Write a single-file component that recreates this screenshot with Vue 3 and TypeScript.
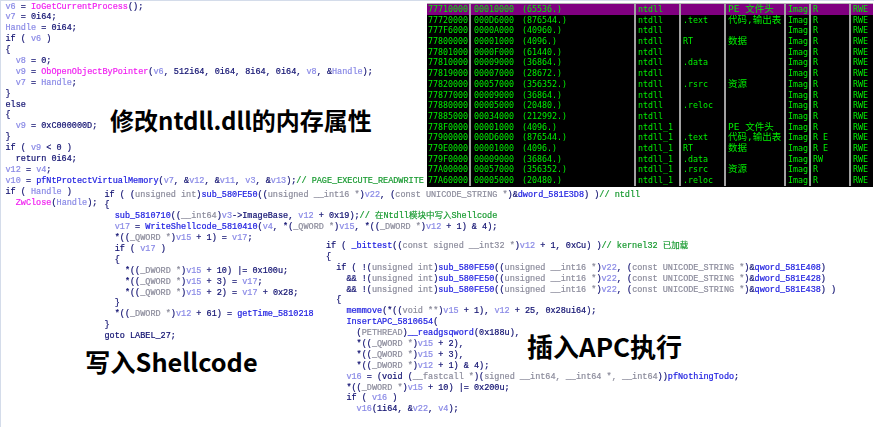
<script setup lang="ts">
type Tok = { c: string; t: string }
function parse(line: string): Tok[] {
  const out: Tok[] = []
  const re = /\[(\w)\|([^\]]*)\]/g
  let last = 0
  let m: RegExpExecArray | null
  while ((m = re.exec(line))) {
    if (m.index > last) out.push({ c: 'd', t: line.slice(last, m.index) })
    out.push({ c: m[1], t: m[2] })
    last = m.index + m[0].length
  }
  if (last < line.length) out.push({ c: 'd', t: line.slice(last) })
  if (!out.length) out.push({ c: 'd', t: ' ' })
  return out
}
const blockA = [
  '[v|v6] = [p|IoGetCurrentProcess]();',
  '[v|v7] = 0i64;',
  '[v|Handle] = 0i64;',
  'if ( [v|v6] )',
  '{',
  '  [v|v8] = 0;',
  '  [v|v9] = [p|ObOpenObjectByPointer]([v|v6], 512i64, 0i64, 8i64, 0i64, [v|v8], &[v|Handle]);',
  '  [v|v7] = [v|Handle];',
  '}',
  'else',
  '{',
  '  [v|v9] = 0xC000000D;',
  '}',
  'if ( [v|v9] < 0 )',
  '  return 0i64;',
  '[v|v12] = [v|v4];',
  '[v|v10] = [n|pfNtProtectVirtualMemory]([v|v7], &[v|v12], &[v|v11], [v|v3], &[v|v13]);[g|// PAGE_EXECUTE_READWRITE]',
  'if ( [v|Handle] )',
  '  [p|ZwClose]([v|Handle]);'
].map(parse)
const blockB = [
  'if ( ([t|unsigned int])[n|sub_580FE50](([t|unsigned __int16 *])[v|v22], ([t|const UNICODE_STRING *])&[n|dword_581E3D8]) )[g|// ntdll]',
  '{',
  '  [n|sub_5810710](([t|__int64])[v|v3]->ImageBase, [v|v12] + 0x19);[g|// 在Ntdll模块中写入Shellcode]',
  '  [v|v17] = [n|WriteShellcode_5810410]([v|v4], *([t|_QWORD *])[v|v15], *(([t|_DWORD *])[v|v12] + 1) & 4);',
  '  *(([t|_QWORD *])[v|v15] + 1) = [v|v17];',
  '  if ( [v|v17] )',
  '  {',
  '    *(([t|_DWORD *])[v|v15] + 10) |= 0x100u;',
  '    *(([t|_QWORD *])[v|v15] + 3) = [v|v17];',
  '    *(([t|_QWORD *])[v|v15] + 2) = [v|v17] + 0x28;',
  '  }',
  '  *(([t|_DWORD *])[v|v12] + 61) = [n|getTime_5810218]',
  '}',
  'goto LABEL_27;'
].map(parse)
const blockC = [
  'if ( [n|_bittest](([t|const signed __int32 *])[v|v12] + 1, 0xCu) )[g|// kernel32 已加载]',
  '{',
  '  if ( !([t|unsigned int])[n|sub_580FE50](([t|unsigned __int16 *])[v|v22], ([t|const UNICODE_STRING *])&[n|qword_581E408])',
  '    && !([t|unsigned int])[n|sub_580FE50](([t|unsigned __int16 *])[v|v22], ([t|const UNICODE_STRING *])&[n|dword_581E428])',
  '    && !([t|unsigned int])[n|sub_580FE50](([t|unsigned __int16 *])[v|v22], ([t|const UNICODE_STRING *])&[n|qword_581E438]) )',
  '  {',
  '    [n|memmove](*(([t|void **])[v|v15] + 1), [v|v12] + 25, 0x28ui64);',
  '    [n|InsertAPC_5810654](',
  '      ([t|PETHREAD])[n|__readgsqword](0x188u),',
  '      *(([t|_QWORD *])[v|v15] + 2),',
  '      *(([t|_QWORD *])[v|v15] + 3),',
  '      *(([t|_DWORD *])[v|v12] + 1) & 4);',
  '    [v|v16] = (void ([t|__fastcall *])([t|signed __int64, __int64 *, __int64]))[n|pfNothingTodo];',
  '    *(([t|_DWORD *])[v|v15] + 10) |= 0x200u;',
  '    if ( [v|v16] )',
  '      [v|v16](1i64, &[v|v22], [v|v4]);'
].map(parse)
const blocks = [
  { id: 'a', lines: blockA },
  { id: 'b', lines: blockB },
  { id: 'k', lines: blockC }
]
const rows = [
  ['77710000', '00010000', '(65536.)', 'ntdll', '', 'PE 文件头', 'Imag', 'R', 'RWE'],
  ['77720000', '000D6000', '(876544.)', 'ntdll', '.text', '代码,输出表', 'Imag', 'R', 'RWE'],
  ['777F6000', '0000A000', '(40960.)', 'ntdll', '', '', 'Imag', 'R', 'RWE'],
  ['77800000', '00001000', '(4096.)', 'ntdll', 'RT', '数据', 'Imag', 'R', 'RWE'],
  ['77801000', '0000F000', '(61440.)', 'ntdll', '', '', 'Imag', 'R', 'RWE'],
  ['77810000', '00009000', '(36864.)', 'ntdll', '.data', '', 'Imag', 'R', 'RWE'],
  ['77819000', '00007000', '(28672.)', 'ntdll', '', '', 'Imag', 'R', 'RWE'],
  ['77820000', '00057000', '(356352.)', 'ntdll', '.rsrc', '资源', 'Imag', 'R', 'RWE'],
  ['77877000', '00009000', '(36864.)', 'ntdll', '', '', 'Imag', 'R', 'RWE'],
  ['77880000', '00005000', '(20480.)', 'ntdll', '.reloc', '', 'Imag', 'R', 'RWE'],
  ['77885000', '00034000', '(212992.)', 'ntdll', '', '', 'Imag', 'R', 'RWE'],
  ['778F0000', '00001000', '(4096.)', 'ntdll_1', '', 'PE 文件头', 'Imag', 'R', 'RWE'],
  ['77900000', '000D6000', '(876544.)', 'ntdll_1', '.text', '代码,输出表', 'Imag', 'R E', 'RWE'],
  ['779E0000', '00001000', '(4096.)', 'ntdll_1', 'RT', '数据', 'Imag', 'R E', 'RWE'],
  ['779F0000', '00009000', '(36864.)', 'ntdll_1', '.data', '', 'Imag', 'RW', 'RWE'],
  ['77A00000', '00057000', '(356352.)', 'ntdll_1', '.rsrc', '资源', 'Imag', 'R', 'RWE'],
  ['77A60000', '00005000', '(20480.)', 'ntdll_1', '.reloc', '', 'Imag', 'R', 'RWE']
]
const labels = [
  { id: 'l1', text: '修改ntdll.dll的内存属性' },
  { id: 'l2', text: '写入Shellcode' },
  { id: 'l3', text: '插入APC执行' }
]
</script>

<template>
  <div class="stage">
    <div v-for="b in blocks" :key="b.id" class="code" :class="b.id">
      <div v-for="(line, i) in b.lines" :key="i" class="line"><span v-for="(tok, j) in line" :key="j" :class="tok.c">{{ tok.t }}</span></div>
    </div>
    <div class="map">
      <div v-for="(r, i) in rows" :key="i" class="row" :class="{ sel: i === 0 }">
        <span class="cell">{{ r[0] }}</span>
        <span class="cell size"><span class="hex">{{ r[1] }}</span><span>{{ r[2] }}</span></span>
        <span class="cell">{{ r[3] }}</span>
        <span class="cell">{{ r[4] }}</span>
        <span class="cell cjk">{{ r[5] }}</span>
        <span class="cell">{{ r[6] }}</span>
        <span class="cell">{{ r[7] }}</span>
        <span class="cell last">{{ r[8] }}</span>
      </div>
    </div>
    <div v-for="l in labels" :key="l.id" class="label" :class="l.id">{{ l.text }}</div>
  </div>
</template>

<style scoped>
.stage {
  position: relative;
  width: 874px;
  height: 427px;
  overflow: hidden;
  background: #fff;
  border-top: 1px solid #d4dcea;
  border-left: 1px solid #d4dcea;
  box-sizing: border-box;
}
.code {
  position: absolute;
  font-family: "Liberation Mono", "Noto Sans CJK SC", monospace;
  font-size: 8.5px;
  line-height: 10.9px;
  white-space: pre;
  color: #101070;
  filter: blur(0.35px);
  -webkit-text-stroke: 0.2px currentColor;
}
.a { left: 4.5px; top: 0.5px; }
.b { left: 103.5px; top: 188.5px; }
.k { left: 325px; top: 240px; }
.line { height: 10.9px; }
.v { color: #8a8ae6; }
.p { color: #f020f0; }
.n { color: #1a1ae0; }
.t { color: #8c8c9c; }
.g { color: #189a30; }
.map {
  position: absolute;
  left: 426px;
  top: 2px;
  width: 446px;
  height: 184px;
  background: #000;
  border-top: 1px solid #b4b4b4;
  box-sizing: border-box;
  font-family: "DejaVu Sans Mono", "Noto Sans CJK SC", monospace;
  font-size: 8.33px;
  color: #00f000;
  filter: blur(0.35px);
  overflow: hidden;
}
.row {
  display: grid;
  grid-template-columns: 44px 165px 45px 45px 60px 25px 40px 22px;
  height: 10.7px;
  line-height: 10.7px;
  white-space: pre;
}
.row.sel {
  background: #800080;
}
.cell {
  padding-left: 1px;
  box-shadow: inset -2px 0 0 #a2a2a2;
  min-width: 0;
}
.row .last { box-shadow: none; }
.size {
  display: flex;
}
.hex { width: 50px; flex: none; padding-left: 2px; box-sizing: border-box; }
.cjk { font-size: 9.5px; }
.row .cell:nth-child(n + 3) { padding-left: 2px; }
.label {
  position: absolute;
  font-family: "Noto Sans CJK SC", sans-serif;
  font-weight: 700;
  color: #000;
  white-space: pre;
  line-height: 34px;
}
.l1 { left: 109px; top: 101.5px; font-size: 24px; }
.l2 { left: 84px; top: 343px; font-size: 25.3px; }
.l3 { left: 526px; top: 328px; font-size: 26px; }
</style>
<style>
html, body { margin: 0; background: #fff; }
</style>
